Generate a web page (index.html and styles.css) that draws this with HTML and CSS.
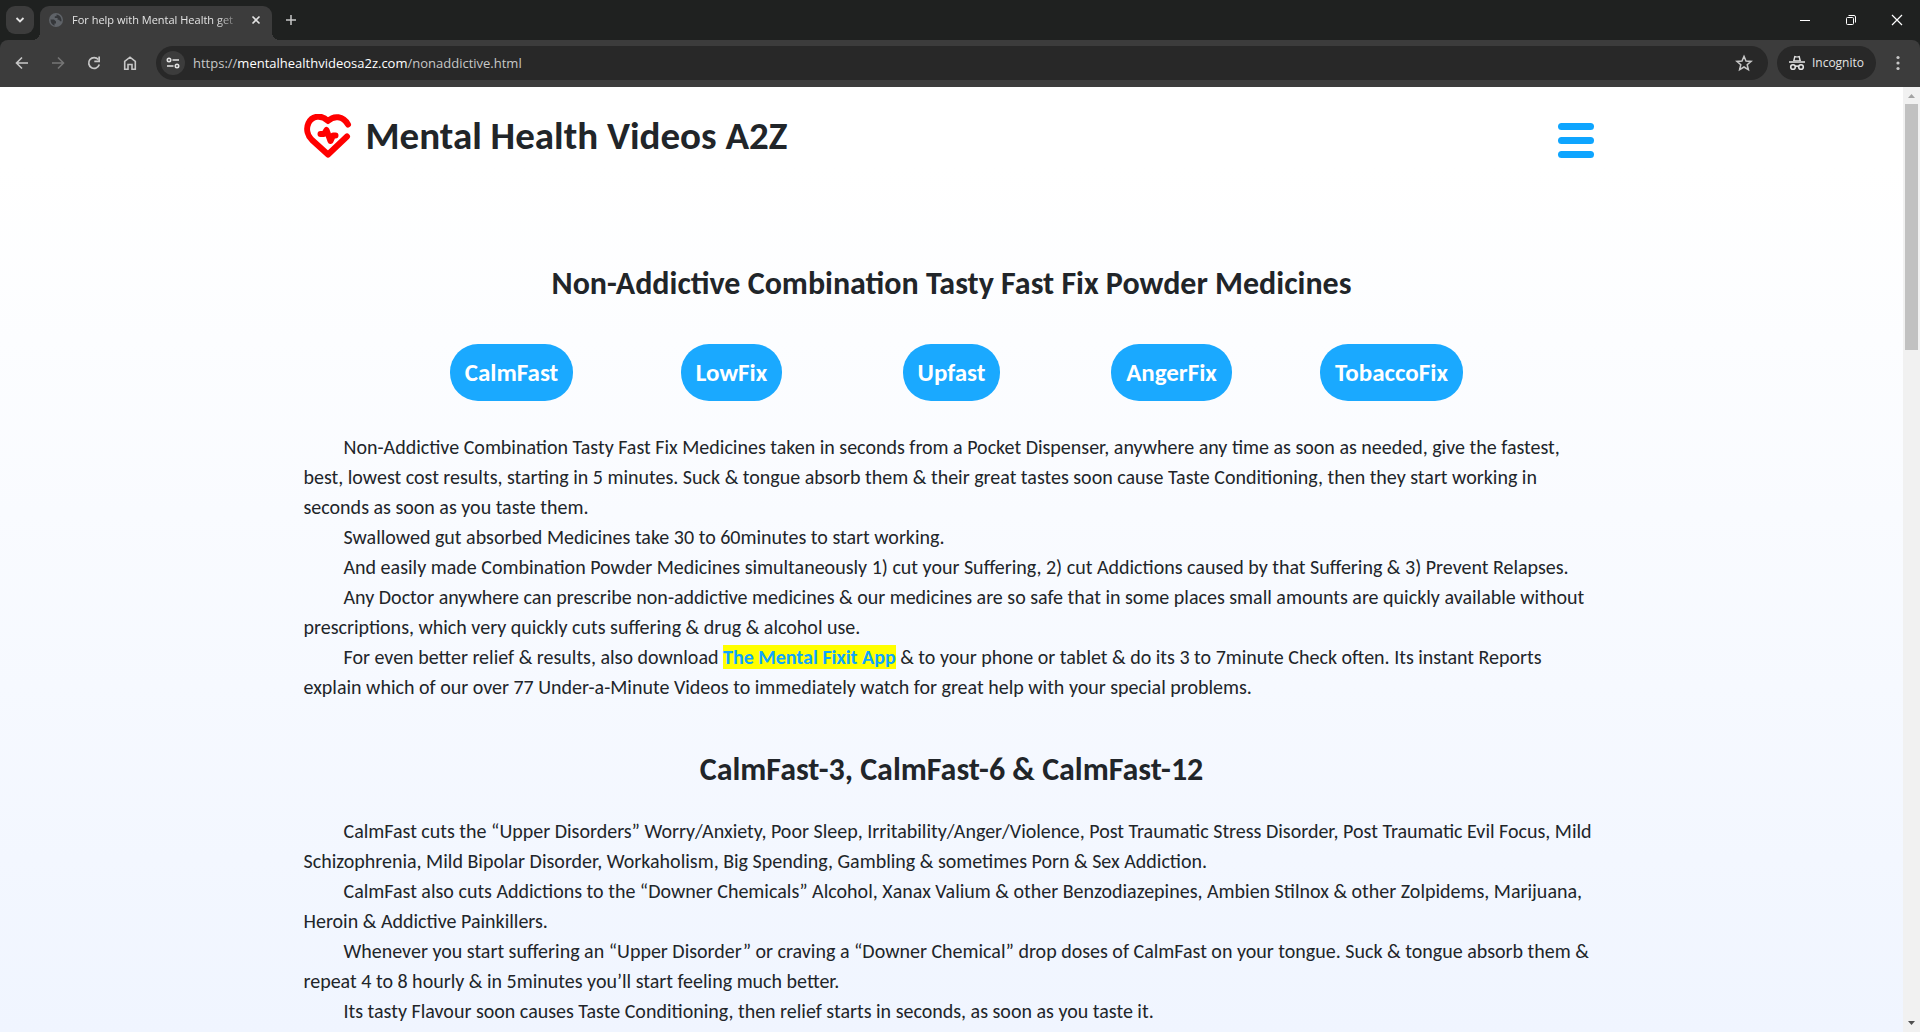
FILE: index.html
```html
<!DOCTYPE html>
<html lang="en">
<head>
<meta charset="utf-8">
<title>For help with Mental Health get Mental Health Videos A2Z</title>
<link rel="stylesheet" href="styles.css">
</head>
<body>
<div class="chrome">
<div class="tabbar">
  <button class="tab-search" aria-label="Search tabs"><svg width="10" height="10" viewBox="0 0 10 10"><path d="M1.500 3l3.500 3.500L8.500 3" fill="none" stroke="#e3e3e3" stroke-width="1.800"/></svg></button>
  <div class="tab">
    <svg width="14" height="14" viewBox="0 0 14 14"><circle cx="7" cy="7" r="7" fill="#5f6368"/><path d="M1.500 6.500h3.500l2 2v2H5.500v2.200C3 12 1.500 9.500 1.500 6.500zM7.500 1.500v1.800H5.800v1.800h2.800v1.700h1.600l.8 1.400h1.500C12.800 4.500 10.500 1.800 7.500 1.500z" fill="#35373a"/></svg>
    <span class="tab-title">For help with Mental Health get</span>
    <button class="tab-close" aria-label="Close tab"><svg width="10" height="10" viewBox="0 0 10 10"><path d="M1.500 1.500l7 7M8.500 1.500l-7 7" stroke="#e3e3e3" stroke-width="1.600"/></svg></button>
  </div>
  <button class="tab-new" aria-label="New tab"><svg width="10" height="10" viewBox="0 0 10 10"><path d="M5 0v10M0 5h10" stroke="#c7c7c7" stroke-width="1.500"/></svg></button>
  <div class="window-buttons">
    <button aria-label="Minimize"><svg width="12" height="12" viewBox="0 0 12 12"><path d="M1 6.500h10" stroke="#fff"/></svg></button>
    <button aria-label="Restore"><svg width="12" height="12" viewBox="0 0 12 12" fill="none" stroke="#fff"><rect x="1.500" y="3.500" width="7" height="7" rx="1"/><path d="M3.500 1.500H9a1.500 1.500 0 0 1 1.500 1.500v5.500"/></svg></button>
    <button aria-label="Close"><svg width="12" height="12" viewBox="0 0 12 12"><path d="M1 1l10 10M11 1L1 11" stroke="#fff" stroke-width="1.200"/></svg></button>
  </div>
</div>
<div class="toolbar">
  <button class="nav" aria-label="Back"><svg width="14" height="14" viewBox="0 0 14 14"><path d="M13 7H2M7 1.500L1.500 7 7 12.500" fill="none" stroke="#c7c7c7" stroke-width="1.600"/></svg></button>
  <button class="nav" aria-label="Forward"><svg width="14" height="14" viewBox="0 0 14 14"><path d="M1 7h11M7 1.500L12.500 7 7 12.500" fill="none" stroke="#757575" stroke-width="1.600"/></svg></button>
  <button class="nav" aria-label="Reload"><svg width="14" height="14" viewBox="0 0 14 14"><path d="M11.300 3.500A5.400 5.400 0 1 0 12.300 8.500" fill="none" stroke="#c7c7c7" stroke-width="1.700"/><path d="M13 .5v5.700H7.300V4.600h4V.5z" fill="#c7c7c7"/></svg></button>
  <button class="nav" aria-label="Home"><svg width="14" height="14" viewBox="0 0 14 14"><path d="M1.700 5.300L7 1.200l5.300 4.100v7.900H9V8.500H5v4.700H1.700z" fill="none" stroke="#c7c7c7" stroke-width="1.600"/></svg></button>
  <div class="address">
    <button class="site-info" aria-label="Site information"><svg width="14" height="12" viewBox="0 0 14 12" fill="none" stroke="#e3e3e3" stroke-width="1.600"><circle cx="3" cy="3" r="1.700"/><path d="M6.500 3H13M1 9h6.500"/><circle cx="11" cy="9" r="1.700"/></svg></button>
    <p class="url">https://<span>mentalhealthvideosa2z.com</span>/nonaddictive.html</p>
    <button class="star" aria-label="Bookmark"><svg width="18" height="18" viewBox="0 0 18 18"><path d="M9 2.300l2 4.700 5.100.400-3.900 3.300 1.200 5L9 13l-4.400 2.700 1.200-5L1.900 7.400 7 7z" fill="none" stroke="#c7c7c7" stroke-width="1.500"/></svg></button>
  </div>
  <div class="incognito">
    <svg width="16" height="16" viewBox="0 0 16 16"><path d="M4 6L5.300.8 8 1.600l2.700-.8L12 6z M0 6.300h16v1.500H0z" fill="#e3e3e3"/><path d="M6.300 2.500h3.400l.6 2.700H5.700z" fill="#282828"/><g fill="none" stroke="#e3e3e3" stroke-width="1.600"><circle cx="4" cy="12" r="2.300"/><circle cx="12" cy="12" r="2.300"/><path d="M6.300 11.500q1.700-.9 3.400 0"/></g></svg>
    <span>Incognito</span>
  </div>
  <button class="more" aria-label="Menu"><svg width="4" height="16" viewBox="0 0 4 16" fill="#c7c7c7"><circle cx="2" cy="2.500" r="1.600"/><circle cx="2" cy="8" r="1.600"/><circle cx="2" cy="13.500" r="1.600"/></svg></button>
</div>
</div>
<div class="viewport">
  <div class="page">
    <div class="container">
      <header class="site-header">
        <svg class="logo" width="48" height="44" viewBox="0 0 48 44" fill="none" stroke="#f00" stroke-width="6" stroke-linecap="round" stroke-linejoin="round"><path d="M44 10.500C39 2 30 1 24 7 17 0 8 2 4.500 9 1.500 15.500 4 22 8 26L24 40.500 43 22.500"/><path d="M16.500 20h3.500l2.500-4 4 11 2.500-5.500h2.500" stroke-width="6"/></svg>
        <h1>Mental Health Videos A2Z</h1>
        <button class="hamburger" aria-label="Open menu"><i></i><i></i><i></i></button>
      </header>
      <main>
        <h2>Non-Addictive Combination Tasty Fast Fix Powder Medicines</h2>
        <nav class="pills">
          <a href="#calmfast">CalmFast</a>
          <a href="#lowfix">LowFix</a>
          <a href="#upfast">Upfast</a>
          <a href="#angerfix">AngerFix</a>
          <a href="#tobaccofix">TobaccoFix</a>
        </nav>
        <p>Non-Addictive Combination Tasty Fast Fix Medicines taken in seconds from a Pocket Dispenser, anywhere any time as soon as needed, give the fastest, best, lowest cost results, starting in 5 minutes. Suck &amp; tongue absorb them &amp; their great tastes soon cause Taste Conditioning, then they start working in seconds as soon as you taste them.</p>
        <p>Swallowed gut absorbed Medicines take 30 to 60minutes to start working.</p>
        <p>And easily made Combination Powder Medicines simultaneously 1) cut your Suffering, 2) cut Addictions caused by that Suffering &amp; 3) Prevent Relapses.</p>
        <p>Any Doctor anywhere can prescribe non-addictive medicines &amp; our medicines are so safe that in some places small amounts are quickly available without prescriptions, which very quickly cuts suffering &amp; drug &amp; alcohol use.</p>
        <p>For even better relief &amp; results, also download <a class="app-link" href="#app">The Mental Fixit App</a> &amp; to your phone or tablet &amp; do its 3 to 7minute Check often. Its instant Reports explain which of our over 77 Under-a-Minute Videos to immediately watch for great help with your special problems.</p>
        <h2 class="section-title" id="calmfast">CalmFast-3, CalmFast-6 &amp; CalmFast-12</h2>
        <p>CalmFast cuts the “Upper Disorders” Worry/Anxiety, Poor Sleep, Irritability/Anger/Violence, Post Traumatic Stress Disorder, Post Traumatic Evil Focus, Mild Schizophrenia, Mild Bipolar Disorder, Workaholism, Big Spending, Gambling &amp; sometimes Porn &amp; Sex Addiction.</p>
        <p>CalmFast also cuts Addictions to the “Downer Chemicals” Alcohol, Xanax Valium &amp; other Benzodiazepines, Ambien Stilnox &amp; other Zolpidems, Marijuana, Heroin &amp; Addictive Painkillers.</p>
        <p>Whenever you start suffering an “Upper Disorder” or craving a “Downer Chemical” drop doses of CalmFast on your tongue. Suck &amp; tongue absorb them &amp; repeat 4 to 8 hourly &amp; in 5minutes you’ll start feeling much better.</p>
        <p>Its tasty Flavour soon causes Taste Conditioning, then relief starts in seconds, as soon as you taste it.</p>
      </main>
    </div>
  </div>
  <div class="scrollbar">
    <svg width="17" height="17" viewBox="0 0 17 17"><path d="M5 11l3.500-4 3.500 4z" fill="#a3a3a3"/></svg>
    <div class="thumb"></div>
    <svg width="17" height="17" viewBox="0 0 17 17"><path d="M5 6l3.500 4L12 6z" fill="#505050"/></svg>
  </div>
</div>
</body>
</html>
```
FILE: styles.css
```css
* { box-sizing: border-box; }
body {
  margin: 0;
  height: 100vh;
  display: flex;
  flex-direction: column;
  overflow: hidden;
  background: #fff;
  font-family: Calibri, Carlito, Lato, sans-serif;
  font-size: 20px;
  line-height: 30px;
  color: #212529;
}
button {
  display: flex;
  align-items: center;
  justify-content: center;
  padding: 0;
  border: 0;
  background: none;
}
p, h1, h2 { margin: 0; }
svg { flex: none; }

/* Browser chrome */
.chrome {
  flex: none;
  background: #1f2120;
  font-family: "Segoe UI", "Open Sans", sans-serif;
  font-size: 12px;
  line-height: 16px;
  color: #e3e3e3;
}
.tabbar, .toolbar { display: flex; }
.tabbar {
  height: 40px;
  padding-left: 6px;
}
.tab-search {
  width: 28px;
  height: 28px;
  margin: 6px 6px 0 0;
  border-radius: 9px;
  background: #3c3c3c;
}
.tab {
  position: relative;
  display: flex;
  align-items: center;
  gap: 9px;
  width: 232px;
  margin-top: 6px;
  padding: 0 11px 6px 9px;
  border-radius: 9px 9px 0 0;
  background: #3c3c3c;
}
.tab::before, .tab::after {
  content: "";
  position: absolute;
  bottom: 0;
  width: 8px;
  height: 8px;
}
.tab::before {
  right: 100%;
  background: radial-gradient(circle at 0 0, transparent 8px, #3c3c3c 8px);
}
.tab::after {
  left: 100%;
  background: radial-gradient(circle at 100% 0, transparent 8px, #3c3c3c 8px);
}
.tab-title {
  flex: 1;
  font-size: 11px;
  white-space: nowrap;
  -webkit-mask-image: linear-gradient(90deg, #000 145px, transparent 170px);
  mask-image: linear-gradient(90deg, #000 145px, transparent 170px);
}
.tab-new { width: 38px; }
.window-buttons {
  display: flex;
  margin-left: auto;
}
.window-buttons button { width: 46px; }
.toolbar {
  align-items: center;
  height: 47px;
  padding: 0 8px 2px 4px;
  border-radius: 8px 8px 0 0;
  background: #3c3c3c;
}
.nav { width: 36px; height: 34px; }
.address {
  display: flex;
  align-items: center;
  flex: 1;
  height: 34px;
  margin: 0 9px 0 8px;
  padding: 0 15px 0 5px;
  border-radius: 17px;
  background: #282828;
}
.site-info {
  width: 24px;
  height: 24px;
  border-radius: 12px;
  background: #3c3c3c;
}
.url {
  flex: 1;
  margin-left: 8px;
  font-size: 13px;
  color: #c7c7c7;
}
.url span { color: #fff; }
.incognito {
  display: flex;
  align-items: center;
  gap: 7px;
  height: 34px;
  padding: 0 12px;
  border-radius: 17px;
  background: #282828;
}
.more { width: 28px; margin-left: 8px; }

/* Page */
.viewport {
  display: flex;
  flex: 1;
  min-height: 0;
}
.page {
  flex: 1;
  overflow: hidden;
  background: linear-gradient(#fff 80px, #f0f5ff 945px);
}
.container {
  max-width: 1320px;
  margin: 0 auto;
  padding: 0 12px;
}
.site-header {
  display: flex;
  align-items: center;
  gap: 14px;
  padding-top: 25px;
}
h1 {
  font-size: 39px;
  line-height: 48px;
}
.hamburger {
  flex-direction: column;
  gap: 7px;
  margin: 8px 6px 0 auto;
}
.hamburger i {
  width: 36px;
  height: 7px;
  border-radius: 4px;
  background: #0ea5ff;
}
h2 {
  font-size: 32px;
  line-height: 36px;
  text-align: center;
}
main { padding-top: 106px; }
.pills {
  display: grid;
  grid-template-columns: repeat(5, 1fr);
  justify-items: center;
  max-width: 1100px;
  margin: 42px auto 31px;
}
.pills a {
  padding: 11px 15px 10px;
  border-radius: 28px;
  background: #1aa9ff;
  color: #fff;
  font-size: 25px;
  font-weight: 700;
  line-height: 36px;
  text-decoration: none;
}
main p { text-indent: 40px; }
.app-link {
  background: #ff0;
  color: #0ea5ff;
  font-weight: 700;
  text-decoration: none;
}
.section-title { padding: 50px 0 28px; }

/* Scroll bar */
.scrollbar {
  display: flex;
  flex-direction: column;
  width: 17px;
  background: #f1f1f1;
}
.thumb {
  width: 13px;
  height: 26%;
  margin: 0 auto auto;
  background: #c1c1c1;
}
```
